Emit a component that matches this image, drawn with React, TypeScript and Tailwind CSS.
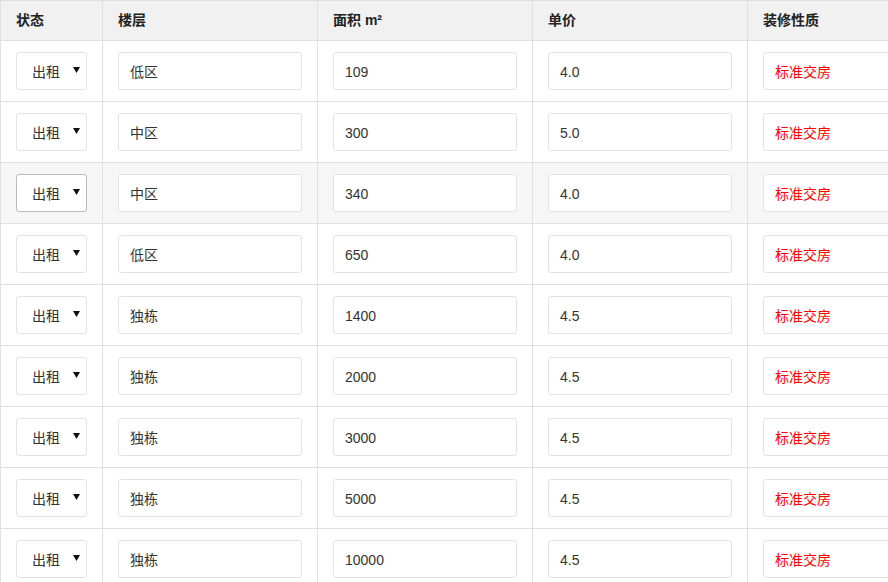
import React from "react";

const rows = [
  { floor: "低区", area: "109", price: "4.0" },
  { floor: "中区", area: "300", price: "5.0" },
  { floor: "中区", area: "340", price: "4.0", hover: true },
  { floor: "低区", area: "650", price: "4.0" },
  { floor: "独栋", area: "1400", price: "4.5" },
  { floor: "独栋", area: "2000", price: "4.5" },
  { floor: "独栋", area: "3000", price: "4.5" },
  { floor: "独栋", area: "5000", price: "4.5" },
  { floor: "独栋", area: "10000", price: "4.5" },
];

const font = { fontFamily: '"Liberation Sans", "Noto Sans CJK SC", sans-serif' };

function Field({ text, red }: { text: string; red?: boolean }) {
  return (
    <div
      className={
        "flex h-[38px] w-full items-center rounded-[3px] border border-[#e3e3e3] bg-white pl-[11px] pt-[2px] text-[14px] " +
        (red ? "text-[#ff0000]" : "text-[#333333]")
      }
    >
      {text}
    </div>
  );
}

export default function App() {
  return (
    <div className="h-[582px] w-[888px] overflow-hidden bg-white" style={font}>
      <div className="w-[965px]">
        <div className="flex h-[41px] border-y border-[#e0e0e0] bg-[#f1f1f1] text-[14px] font-bold text-[#222222]">
          <div className="flex w-[102px] shrink-0 items-center border-l border-[#e0e0e0] px-[15px]">状态</div>
          <div className="flex w-[215px] shrink-0 items-center border-l border-[#e0e0e0] px-[15px]">楼层</div>
          <div className="flex w-[215px] shrink-0 items-center border-l border-[#e0e0e0] px-[15px]">面积 m²</div>
          <div className="flex w-[215px] shrink-0 items-center border-l border-[#e0e0e0] px-[15px]">单价</div>
          <div className="flex w-[215px] shrink-0 items-center border-l border-[#e0e0e0] px-[15px]">装修性质</div>
        </div>
        {rows.map((r, i) => (
          <div
            key={i}
            className={
              "flex h-[61px] border-b border-[#e0e0e0] " + (r.hover ? "bg-[#f6f6f6]" : "bg-white")
            }
          >
            <div className="flex w-[102px] shrink-0 items-center border-l border-[#e0e0e0] px-[15px]">
              <div
                className={
                  "flex h-[38px] w-[71px] items-center justify-between rounded-[3px] border bg-white pl-[15px] pr-[6px] pt-[2px] text-[14px] text-[#333333] " +
                  (r.hover ? "border-[#b9b9b9]" : "border-[#e3e3e3]")
                }
              >
                <span>出租</span>
                <svg width="7" height="6" viewBox="0 0 7 6" className="mb-[4px]">
                  <polygon points="0,0 7,0 3.5,6" fill="#111" />
                </svg>
              </div>
            </div>
            <div className="flex w-[215px] shrink-0 items-center border-l border-[#e0e0e0] px-[15px]">
              <Field text={r.floor} />
            </div>
            <div className="flex w-[215px] shrink-0 items-center border-l border-[#e0e0e0] px-[15px]">
              <Field text={r.area} />
            </div>
            <div className="flex w-[215px] shrink-0 items-center border-l border-[#e0e0e0] px-[15px]">
              <Field text={r.price} />
            </div>
            <div className="flex w-[215px] shrink-0 items-center border-l border-[#e0e0e0] px-[15px]">
              <Field text="标准交房" red />
            </div>
          </div>
        ))}
      </div>
    </div>
  );
}
